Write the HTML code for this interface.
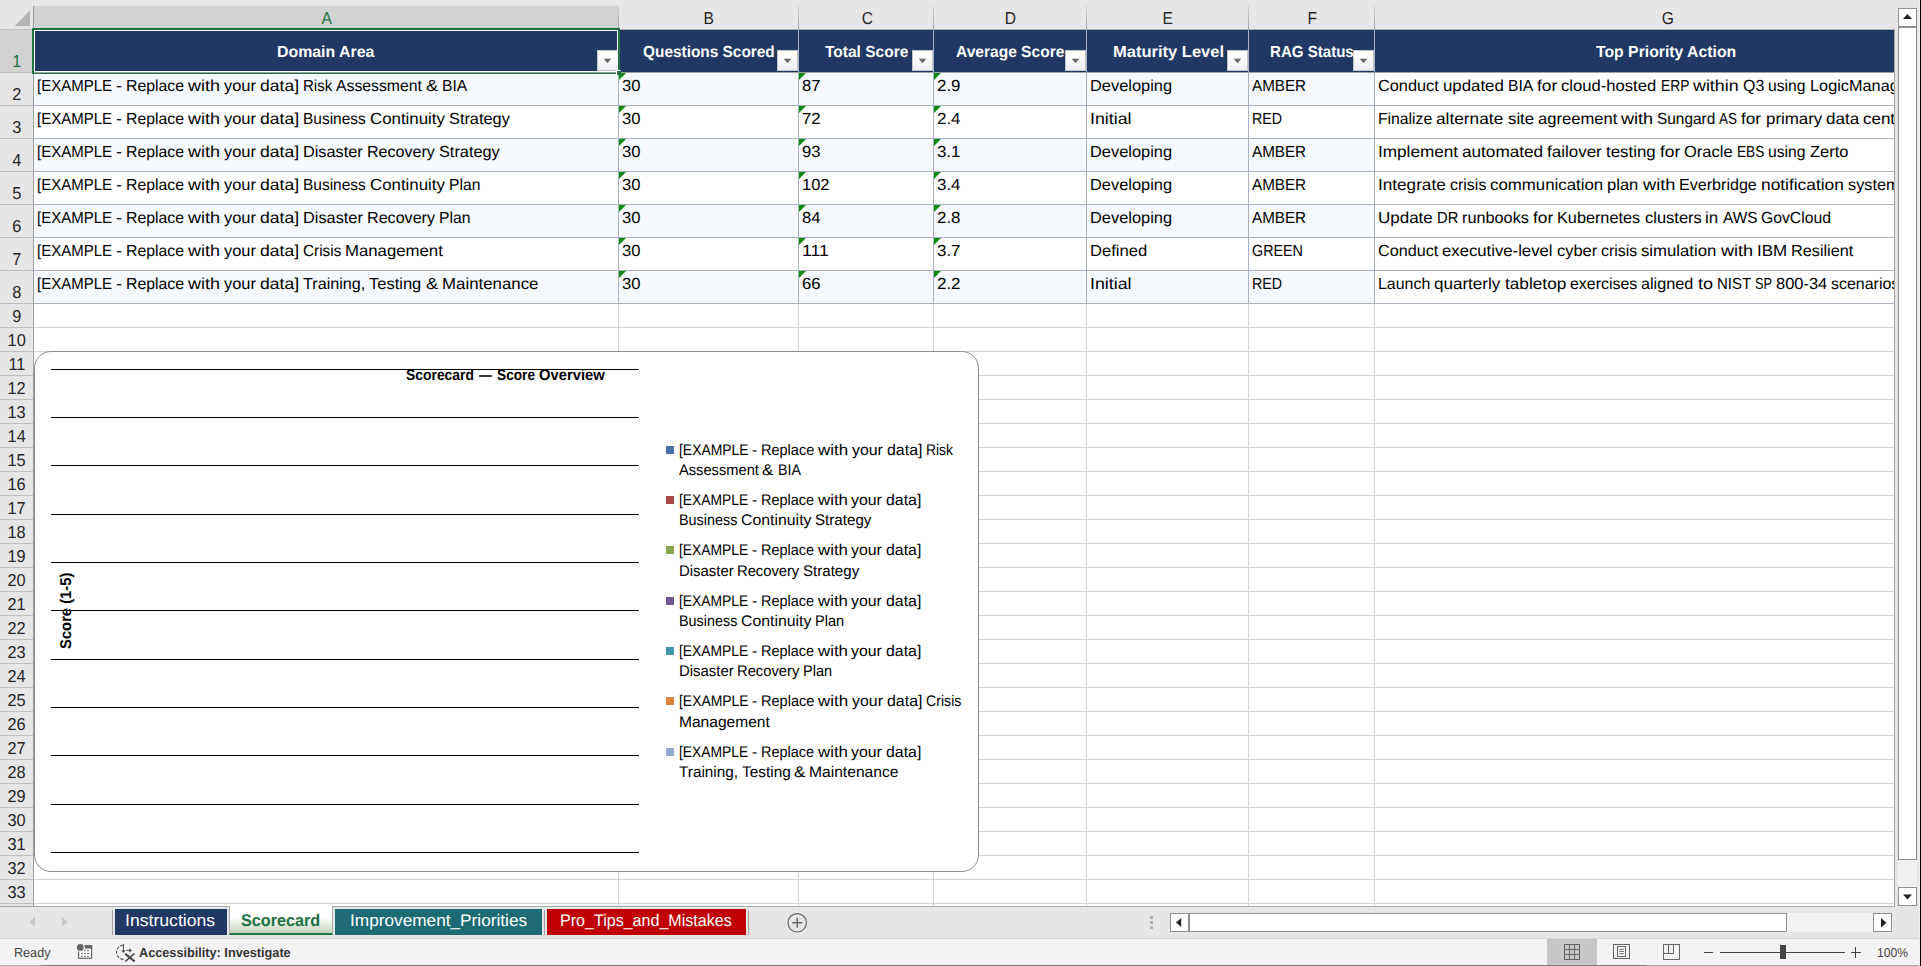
<!DOCTYPE html>
<html lang="en"><head><meta charset="utf-8"><title>Scorecard</title>
<style>
html,body{margin:0;padding:0}
body{width:1921px;height:966px;background:#e6e6e6;position:relative;overflow:hidden;font-family:'Liberation Sans',sans-serif}
body div,body svg,.t{position:absolute;display:block}
.g{left:0;top:0}
.t{white-space:pre;line-height:1;font-family:'Liberation Sans',sans-serif;text-rendering:geometricPrecision}
</style></head><body>
<div style="left:34px;top:30px;width:1860px;height:876px;background:#fff;"></div>
<div style="left:34px;top:303px;width:1860px;height:1px;background:#d4d4d4;"></div>
<div style="left:34px;top:327px;width:1860px;height:1px;background:#d4d4d4;"></div>
<div style="left:34px;top:351px;width:1860px;height:1px;background:#d4d4d4;"></div>
<div style="left:34px;top:375px;width:1860px;height:1px;background:#d4d4d4;"></div>
<div style="left:34px;top:399px;width:1860px;height:1px;background:#d4d4d4;"></div>
<div style="left:34px;top:423px;width:1860px;height:1px;background:#d4d4d4;"></div>
<div style="left:34px;top:447px;width:1860px;height:1px;background:#d4d4d4;"></div>
<div style="left:34px;top:471px;width:1860px;height:1px;background:#d4d4d4;"></div>
<div style="left:34px;top:495px;width:1860px;height:1px;background:#d4d4d4;"></div>
<div style="left:34px;top:519px;width:1860px;height:1px;background:#d4d4d4;"></div>
<div style="left:34px;top:543px;width:1860px;height:1px;background:#d4d4d4;"></div>
<div style="left:34px;top:567px;width:1860px;height:1px;background:#d4d4d4;"></div>
<div style="left:34px;top:591px;width:1860px;height:1px;background:#d4d4d4;"></div>
<div style="left:34px;top:615px;width:1860px;height:1px;background:#d4d4d4;"></div>
<div style="left:34px;top:639px;width:1860px;height:1px;background:#d4d4d4;"></div>
<div style="left:34px;top:663px;width:1860px;height:1px;background:#d4d4d4;"></div>
<div style="left:34px;top:687px;width:1860px;height:1px;background:#d4d4d4;"></div>
<div style="left:34px;top:711px;width:1860px;height:1px;background:#d4d4d4;"></div>
<div style="left:34px;top:735px;width:1860px;height:1px;background:#d4d4d4;"></div>
<div style="left:34px;top:759px;width:1860px;height:1px;background:#d4d4d4;"></div>
<div style="left:34px;top:783px;width:1860px;height:1px;background:#d4d4d4;"></div>
<div style="left:34px;top:807px;width:1860px;height:1px;background:#d4d4d4;"></div>
<div style="left:34px;top:831px;width:1860px;height:1px;background:#d4d4d4;"></div>
<div style="left:34px;top:855px;width:1860px;height:1px;background:#d4d4d4;"></div>
<div style="left:34px;top:879px;width:1860px;height:1px;background:#d4d4d4;"></div>
<div style="left:34px;top:903px;width:1860px;height:1px;background:#d4d4d4;"></div>
<div style="left:618px;top:303px;width:1px;height:603px;background:#d4d4d4;"></div>
<div style="left:798px;top:303px;width:1px;height:603px;background:#d4d4d4;"></div>
<div style="left:933px;top:303px;width:1px;height:603px;background:#d4d4d4;"></div>
<div style="left:1086px;top:303px;width:1px;height:603px;background:#d4d4d4;"></div>
<div style="left:1248px;top:303px;width:1px;height:603px;background:#d4d4d4;"></div>
<div style="left:1374px;top:303px;width:1px;height:603px;background:#d4d4d4;"></div>
<div style="left:34px;top:30px;width:1860px;height:42px;background:#1f3864;"></div>
<div style="left:34px;top:73px;width:1340px;height:32px;background:#f5f8fd;"></div>
<div style="left:34px;top:139px;width:1340px;height:32px;background:#f5f8fd;"></div>
<div style="left:34px;top:205px;width:1340px;height:32px;background:#f5f8fd;"></div>
<div style="left:34px;top:271px;width:1340px;height:32px;background:#f5f8fd;"></div>
<div style="left:34px;top:72px;width:1860px;height:1px;background:#a9b1c2;"></div>
<div style="left:34px;top:105px;width:1860px;height:1px;background:#a9b1c2;"></div>
<div style="left:34px;top:138px;width:1860px;height:1px;background:#a9b1c2;"></div>
<div style="left:34px;top:171px;width:1860px;height:1px;background:#a9b1c2;"></div>
<div style="left:34px;top:204px;width:1860px;height:1px;background:#a9b1c2;"></div>
<div style="left:34px;top:237px;width:1860px;height:1px;background:#a9b1c2;"></div>
<div style="left:34px;top:270px;width:1860px;height:1px;background:#a9b1c2;"></div>
<div style="left:34px;top:303px;width:1860px;height:1px;background:#a9b1c2;"></div>
<div style="left:618px;top:30px;width:1px;height:273px;background:#a9b1c2;"></div>
<div style="left:798px;top:30px;width:1px;height:273px;background:#a9b1c2;"></div>
<div style="left:933px;top:30px;width:1px;height:273px;background:#a9b1c2;"></div>
<div style="left:1086px;top:30px;width:1px;height:273px;background:#a9b1c2;"></div>
<div style="left:1248px;top:30px;width:1px;height:273px;background:#a9b1c2;"></div>
<div style="left:1374px;top:30px;width:1px;height:273px;background:#a9b1c2;"></div>
<span class="t" style="left:276.71px;top:45px;font-size:16.0px;font-weight:700;color:#fff;transform:scaleX(0.9919);transform-origin:left top">Domain Area</span>
<span class="t" style="left:642.82px;top:45px;font-size:16.0px;font-weight:700;color:#fff;transform:scaleX(0.9623);transform-origin:left top">Questions Scored</span>
<span class="t" style="left:824.60px;top:45px;font-size:16.0px;font-weight:700;color:#fff;transform:scaleX(0.9702);transform-origin:left top">Total Score</span>
<span class="t" style="left:956.06px;top:45px;font-size:16.0px;font-weight:700;color:#fff;transform:scaleX(0.9718);transform-origin:left top">Average Score</span>
<span class="t" style="left:1112.57px;top:45px;font-size:16.0px;font-weight:700;color:#fff;transform:scaleX(1.0318);transform-origin:left top">Maturity Level</span>
<span class="t" style="left:1269.56px;top:45px;font-size:16.0px;font-weight:700;color:#fff;transform:scaleX(0.9421);transform-origin:left top">RAG Status</span>
<span class="t" style="left:1596.30px;top:45px;font-size:16.0px;font-weight:700;color:#fff;transform:scaleX(0.9856);transform-origin:left top">Top Priority Action</span>
<div style="left:597px;top:50px;width:21px;height:21px;background:linear-gradient(#fff 20%,#eceef3);border:1px solid #c4c4c4;box-sizing:border-box"></div>
<svg style="left:602px;top:57px" width="11" height="8"><polygon points="1.8,1.8 9.2,1.8 5.5,6.2" fill="#666"/></svg>
<div style="left:777px;top:50px;width:21px;height:21px;background:linear-gradient(#fff 20%,#eceef3);border:1px solid #c4c4c4;box-sizing:border-box"></div>
<svg style="left:782px;top:57px" width="11" height="8"><polygon points="1.8,1.8 9.2,1.8 5.5,6.2" fill="#666"/></svg>
<div style="left:912px;top:50px;width:21px;height:21px;background:linear-gradient(#fff 20%,#eceef3);border:1px solid #c4c4c4;box-sizing:border-box"></div>
<svg style="left:917px;top:57px" width="11" height="8"><polygon points="1.8,1.8 9.2,1.8 5.5,6.2" fill="#666"/></svg>
<div style="left:1065px;top:50px;width:21px;height:21px;background:linear-gradient(#fff 20%,#eceef3);border:1px solid #c4c4c4;box-sizing:border-box"></div>
<svg style="left:1070px;top:57px" width="11" height="8"><polygon points="1.8,1.8 9.2,1.8 5.5,6.2" fill="#666"/></svg>
<div style="left:1227px;top:50px;width:21px;height:21px;background:linear-gradient(#fff 20%,#eceef3);border:1px solid #c4c4c4;box-sizing:border-box"></div>
<svg style="left:1232px;top:57px" width="11" height="8"><polygon points="1.8,1.8 9.2,1.8 5.5,6.2" fill="#666"/></svg>
<div style="left:1353px;top:50px;width:21px;height:21px;background:linear-gradient(#fff 20%,#eceef3);border:1px solid #c4c4c4;box-sizing:border-box"></div>
<svg style="left:1358px;top:57px" width="11" height="8"><polygon points="1.8,1.8 9.2,1.8 5.5,6.2" fill="#666"/></svg>
<div class="g"><span class="t" style="left:37.00px;top:79px;font-size:16.0px;transform:scaleX(0.9371);transform-origin:left top">[EXAMPLE</span> <span class="t" style="left:116.00px;top:79px;font-size:16.0px;transform:scaleX(1.1261);transform-origin:left top">-</span> <span class="t" style="left:126.00px;top:79px;font-size:16.0px;transform:scaleX(0.9880);transform-origin:left top">Replace</span> <span class="t" style="left:188.00px;top:79px;font-size:16.0px;transform:scaleX(1.1247);transform-origin:left top">with</span> <span class="t" style="left:224.00px;top:79px;font-size:16.0px;transform:scaleX(1.0281);transform-origin:left top">your</span> <span class="t" style="left:260.00px;top:79px;font-size:16.0px;transform:scaleX(1.0959);transform-origin:left top">data]</span> <span class="t" style="left:303.00px;top:79px;font-size:16.0px;transform:scaleX(0.9408);transform-origin:left top">Risk</span> <span class="t" style="left:336.30px;top:79px;font-size:16.0px;transform:scaleX(0.9844);transform-origin:left top">Assessment</span> <span class="t" style="left:426.12px;top:79px;font-size:16.0px;transform:scaleX(1.1348);transform-origin:left top">&amp;</span> <span class="t" style="left:442.27px;top:79px;font-size:16.0px;transform:scaleX(0.9783);transform-origin:left top">BIA</span></div>
<div class="g"><span class="t" style="left:622.00px;top:79px;font-size:16.0px;transform:scaleX(1.0395);transform-origin:left top">30</span></div>
<div class="g"><span class="t" style="left:802.00px;top:79px;font-size:16.0px;transform:scaleX(1.0395);transform-origin:left top">87</span></div>
<div class="g"><span class="t" style="left:937.00px;top:79px;font-size:16.0px;transform:scaleX(1.0566);transform-origin:left top">2.9</span></div>
<div class="g"><span class="t" style="left:1090.00px;top:79px;font-size:16.0px;transform:scaleX(1.0255);transform-origin:left top">Developing</span></div>
<div class="g"><span class="t" style="left:1252.00px;top:79px;font-size:16.0px;transform:scaleX(0.9508);transform-origin:left top">AMBER</span></div>
<div class="g"><span class="t" style="left:1378.00px;top:79px;font-size:16.0px;transform:scaleX(1.0198);transform-origin:left top">Conduct</span> <span class="t" style="left:1442.83px;top:79px;font-size:16.0px;transform:scaleX(1.0508);transform-origin:left top">updated</span> <span class="t" style="left:1507.65px;top:79px;font-size:16.0px;transform:scaleX(0.9819);transform-origin:left top">BIA</span> <span class="t" style="left:1537.03px;top:79px;font-size:16.0px;transform:scaleX(1.0849);transform-origin:left top">for</span> <span class="t" style="left:1561.33px;top:79px;font-size:16.0px;transform:scaleX(1.0392);transform-origin:left top">cloud-hosted</span> <span class="t" style="left:1660.60px;top:79px;font-size:16.0px;transform:scaleX(0.8621);transform-origin:left top">ERP</span> <span class="t" style="left:1693.01px;top:79px;font-size:16.0px;transform:scaleX(1.1143);transform-origin:left top">within</span> <span class="t" style="left:1742.64px;top:79px;font-size:16.0px;transform:scaleX(0.9966);transform-origin:left top">Q3</span> <span class="t" style="left:1767.97px;top:79px;font-size:16.0px;transform:scaleX(0.9798);transform-origin:left top">using</span> <span class="t" style="left:1809.50px;top:79px;font-size:16.0px;transform:scaleX(1.0189);transform-origin:left top">LogicManager</span></div>
<svg style="left:619px;top:73px" width="8" height="8"><polygon points="0,0 7,0 0,7" fill="#0f8a10"/></svg>
<svg style="left:799px;top:73px" width="8" height="8"><polygon points="0,0 7,0 0,7" fill="#0f8a10"/></svg>
<svg style="left:934px;top:73px" width="8" height="8"><polygon points="0,0 7,0 0,7" fill="#0f8a10"/></svg>
<div class="g"><span class="t" style="left:37.00px;top:112px;font-size:16.0px;transform:scaleX(0.9371);transform-origin:left top">[EXAMPLE</span> <span class="t" style="left:116.00px;top:112px;font-size:16.0px;transform:scaleX(1.1261);transform-origin:left top">-</span> <span class="t" style="left:126.00px;top:112px;font-size:16.0px;transform:scaleX(0.9880);transform-origin:left top">Replace</span> <span class="t" style="left:188.00px;top:112px;font-size:16.0px;transform:scaleX(1.1247);transform-origin:left top">with</span> <span class="t" style="left:224.00px;top:112px;font-size:16.0px;transform:scaleX(1.0281);transform-origin:left top">your</span> <span class="t" style="left:260.00px;top:112px;font-size:16.0px;transform:scaleX(1.0959);transform-origin:left top">data]</span> <span class="t" style="left:303.00px;top:112px;font-size:16.0px;transform:scaleX(0.9676);transform-origin:left top">Business</span> <span class="t" style="left:369.87px;top:112px;font-size:16.0px;transform:scaleX(1.0538);transform-origin:left top">Continuity</span> <span class="t" style="left:448.91px;top:112px;font-size:16.0px;transform:scaleX(1.0203);transform-origin:left top">Strategy</span></div>
<div class="g"><span class="t" style="left:622.00px;top:112px;font-size:16.0px;transform:scaleX(1.0395);transform-origin:left top">30</span></div>
<div class="g"><span class="t" style="left:802.00px;top:112px;font-size:16.0px;transform:scaleX(1.0395);transform-origin:left top">72</span></div>
<div class="g"><span class="t" style="left:937.00px;top:112px;font-size:16.0px;transform:scaleX(1.0566);transform-origin:left top">2.4</span></div>
<div class="g"><span class="t" style="left:1090.00px;top:112px;font-size:16.0px;transform:scaleX(1.1111);transform-origin:left top">Initial</span></div>
<div class="g"><span class="t" style="left:1252.00px;top:112px;font-size:16.0px;transform:scaleX(0.8881);transform-origin:left top">RED</span></div>
<div class="g"><span class="t" style="left:1378.00px;top:112px;font-size:16.0px;transform:scaleX(0.9833);transform-origin:left top">Finalize</span> <span class="t" style="left:1436.23px;top:112px;font-size:16.0px;transform:scaleX(1.0802);transform-origin:left top">alternate</span> <span class="t" style="left:1507.50px;top:112px;font-size:16.0px;transform:scaleX(1.0483);transform-origin:left top">site</span> <span class="t" style="left:1537.62px;top:112px;font-size:16.0px;transform:scaleX(1.0368);transform-origin:left top">agreement</span> <span class="t" style="left:1620.94px;top:112px;font-size:16.0px;transform:scaleX(1.1290);transform-origin:left top">with</span> <span class="t" style="left:1657.08px;top:112px;font-size:16.0px;transform:scaleX(0.9625);transform-origin:left top">Sungard</span> <span class="t" style="left:1719.33px;top:112px;font-size:16.0px;transform:scaleX(0.8466);transform-origin:left top">AS</span> <span class="t" style="left:1741.41px;top:112px;font-size:16.0px;transform:scaleX(1.0753);transform-origin:left top">for</span> <span class="t" style="left:1765.51px;top:112px;font-size:16.0px;transform:scaleX(1.0540);transform-origin:left top">primary</span> <span class="t" style="left:1825.74px;top:112px;font-size:16.0px;transform:scaleX(1.0638);transform-origin:left top">data</span> <span class="t" style="left:1862.88px;top:112px;font-size:16.0px;transform:scaleX(1.0610);transform-origin:left top">center</span></div>
<svg style="left:619px;top:106px" width="8" height="8"><polygon points="0,0 7,0 0,7" fill="#0f8a10"/></svg>
<svg style="left:799px;top:106px" width="8" height="8"><polygon points="0,0 7,0 0,7" fill="#0f8a10"/></svg>
<svg style="left:934px;top:106px" width="8" height="8"><polygon points="0,0 7,0 0,7" fill="#0f8a10"/></svg>
<div class="g"><span class="t" style="left:37.00px;top:145px;font-size:16.0px;transform:scaleX(0.9371);transform-origin:left top">[EXAMPLE</span> <span class="t" style="left:116.00px;top:145px;font-size:16.0px;transform:scaleX(1.1261);transform-origin:left top">-</span> <span class="t" style="left:126.00px;top:145px;font-size:16.0px;transform:scaleX(0.9880);transform-origin:left top">Replace</span> <span class="t" style="left:188.00px;top:145px;font-size:16.0px;transform:scaleX(1.1247);transform-origin:left top">with</span> <span class="t" style="left:224.00px;top:145px;font-size:16.0px;transform:scaleX(1.0281);transform-origin:left top">your</span> <span class="t" style="left:260.00px;top:145px;font-size:16.0px;transform:scaleX(1.0959);transform-origin:left top">data]</span> <span class="t" style="left:303.00px;top:145px;font-size:16.0px;transform:scaleX(1.0174);transform-origin:left top">Disaster</span> <span class="t" style="left:366.75px;top:145px;font-size:16.0px;transform:scaleX(1.0032);transform-origin:left top">Recovery</span> <span class="t" style="left:438.59px;top:145px;font-size:16.0px;transform:scaleX(1.0189);transform-origin:left top">Strategy</span></div>
<div class="g"><span class="t" style="left:622.00px;top:145px;font-size:16.0px;transform:scaleX(1.0395);transform-origin:left top">30</span></div>
<div class="g"><span class="t" style="left:802.00px;top:145px;font-size:16.0px;transform:scaleX(1.0395);transform-origin:left top">93</span></div>
<div class="g"><span class="t" style="left:937.00px;top:145px;font-size:16.0px;transform:scaleX(1.0566);transform-origin:left top">3.1</span></div>
<div class="g"><span class="t" style="left:1090.00px;top:145px;font-size:16.0px;transform:scaleX(1.0255);transform-origin:left top">Developing</span></div>
<div class="g"><span class="t" style="left:1252.00px;top:145px;font-size:16.0px;transform:scaleX(0.9508);transform-origin:left top">AMBER</span></div>
<div class="g"><span class="t" style="left:1378.00px;top:145px;font-size:16.0px;transform:scaleX(1.0720);transform-origin:left top">Implement</span> <span class="t" style="left:1462.13px;top:145px;font-size:16.0px;transform:scaleX(1.0724);transform-origin:left top">automated</span> <span class="t" style="left:1547.27px;top:145px;font-size:16.0px;transform:scaleX(1.0612);transform-origin:left top">failover</span> <span class="t" style="left:1606.05px;top:145px;font-size:16.0px;transform:scaleX(1.0536);transform-origin:left top">testing</span> <span class="t" style="left:1659.77px;top:145px;font-size:16.0px;transform:scaleX(1.0857);transform-origin:left top">for</span> <span class="t" style="left:1684.10px;top:145px;font-size:16.0px;transform:scaleX(1.0324);transform-origin:left top">Oracle</span> <span class="t" style="left:1736.81px;top:145px;font-size:16.0px;transform:scaleX(0.8548);transform-origin:left top">EBS</span> <span class="t" style="left:1768.23px;top:145px;font-size:16.0px;transform:scaleX(0.9805);transform-origin:left top">using</span> <span class="t" style="left:1809.78px;top:145px;font-size:16.0px;transform:scaleX(1.0314);transform-origin:left top">Zerto</span></div>
<svg style="left:619px;top:139px" width="8" height="8"><polygon points="0,0 7,0 0,7" fill="#0f8a10"/></svg>
<svg style="left:799px;top:139px" width="8" height="8"><polygon points="0,0 7,0 0,7" fill="#0f8a10"/></svg>
<svg style="left:934px;top:139px" width="8" height="8"><polygon points="0,0 7,0 0,7" fill="#0f8a10"/></svg>
<div class="g"><span class="t" style="left:37.00px;top:178px;font-size:16.0px;transform:scaleX(0.9371);transform-origin:left top">[EXAMPLE</span> <span class="t" style="left:116.00px;top:178px;font-size:16.0px;transform:scaleX(1.1261);transform-origin:left top">-</span> <span class="t" style="left:126.00px;top:178px;font-size:16.0px;transform:scaleX(0.9880);transform-origin:left top">Replace</span> <span class="t" style="left:188.00px;top:178px;font-size:16.0px;transform:scaleX(1.1247);transform-origin:left top">with</span> <span class="t" style="left:224.00px;top:178px;font-size:16.0px;transform:scaleX(1.0281);transform-origin:left top">your</span> <span class="t" style="left:260.00px;top:178px;font-size:16.0px;transform:scaleX(1.0959);transform-origin:left top">data]</span> <span class="t" style="left:303.00px;top:178px;font-size:16.0px;transform:scaleX(0.9665);transform-origin:left top">Business</span> <span class="t" style="left:369.79px;top:178px;font-size:16.0px;transform:scaleX(1.0526);transform-origin:left top">Continuity</span> <span class="t" style="left:448.73px;top:178px;font-size:16.0px;transform:scaleX(0.9797);transform-origin:left top">Plan</span></div>
<div class="g"><span class="t" style="left:622.00px;top:178px;font-size:16.0px;transform:scaleX(1.0395);transform-origin:left top">30</span></div>
<div class="g"><span class="t" style="left:802.00px;top:178px;font-size:16.0px;transform:scaleX(1.0301);transform-origin:left top">102</span></div>
<div class="g"><span class="t" style="left:937.00px;top:178px;font-size:16.0px;transform:scaleX(1.0566);transform-origin:left top">3.4</span></div>
<div class="g"><span class="t" style="left:1090.00px;top:178px;font-size:16.0px;transform:scaleX(1.0255);transform-origin:left top">Developing</span></div>
<div class="g"><span class="t" style="left:1252.00px;top:178px;font-size:16.0px;transform:scaleX(0.9508);transform-origin:left top">AMBER</span></div>
<div class="g"><span class="t" style="left:1378.00px;top:178px;font-size:16.0px;transform:scaleX(1.0720);transform-origin:left top">Integrate</span> <span class="t" style="left:1449.75px;top:178px;font-size:16.0px;transform:scaleX(0.9984);transform-origin:left top">crisis</span> <span class="t" style="left:1490.17px;top:178px;font-size:16.0px;transform:scaleX(1.0518);transform-origin:left top">communication</span> <span class="t" style="left:1607.38px;top:178px;font-size:16.0px;transform:scaleX(1.0356);transform-origin:left top">plan</span> <span class="t" style="left:1642.75px;top:178px;font-size:16.0px;transform:scaleX(1.1365);transform-origin:left top">with</span> <span class="t" style="left:1679.13px;top:178px;font-size:16.0px;transform:scaleX(1.0056);transform-origin:left top">Everbridge</span> <span class="t" style="left:1760.98px;top:178px;font-size:16.0px;transform:scaleX(1.0833);transform-origin:left top">notification</span> <span class="t" style="left:1847.88px;top:178px;font-size:16.0px;transform:scaleX(1.0170);transform-origin:left top">system</span></div>
<svg style="left:619px;top:172px" width="8" height="8"><polygon points="0,0 7,0 0,7" fill="#0f8a10"/></svg>
<svg style="left:799px;top:172px" width="8" height="8"><polygon points="0,0 7,0 0,7" fill="#0f8a10"/></svg>
<svg style="left:934px;top:172px" width="8" height="8"><polygon points="0,0 7,0 0,7" fill="#0f8a10"/></svg>
<div class="g"><span class="t" style="left:37.00px;top:211px;font-size:16.0px;transform:scaleX(0.9371);transform-origin:left top">[EXAMPLE</span> <span class="t" style="left:116.00px;top:211px;font-size:16.0px;transform:scaleX(1.1261);transform-origin:left top">-</span> <span class="t" style="left:126.00px;top:211px;font-size:16.0px;transform:scaleX(0.9880);transform-origin:left top">Replace</span> <span class="t" style="left:188.00px;top:211px;font-size:16.0px;transform:scaleX(1.1247);transform-origin:left top">with</span> <span class="t" style="left:224.00px;top:211px;font-size:16.0px;transform:scaleX(1.0281);transform-origin:left top">your</span> <span class="t" style="left:260.00px;top:211px;font-size:16.0px;transform:scaleX(1.0959);transform-origin:left top">data]</span> <span class="t" style="left:303.00px;top:211px;font-size:16.0px;transform:scaleX(1.0207);transform-origin:left top">Disaster</span> <span class="t" style="left:366.95px;top:211px;font-size:16.0px;transform:scaleX(1.0065);transform-origin:left top">Recovery</span> <span class="t" style="left:439.03px;top:211px;font-size:16.0px;transform:scaleX(0.9827);transform-origin:left top">Plan</span></div>
<div class="g"><span class="t" style="left:622.00px;top:211px;font-size:16.0px;transform:scaleX(1.0395);transform-origin:left top">30</span></div>
<div class="g"><span class="t" style="left:802.00px;top:211px;font-size:16.0px;transform:scaleX(1.0395);transform-origin:left top">84</span></div>
<div class="g"><span class="t" style="left:937.00px;top:211px;font-size:16.0px;transform:scaleX(1.0566);transform-origin:left top">2.8</span></div>
<div class="g"><span class="t" style="left:1090.00px;top:211px;font-size:16.0px;transform:scaleX(1.0255);transform-origin:left top">Developing</span></div>
<div class="g"><span class="t" style="left:1252.00px;top:211px;font-size:16.0px;transform:scaleX(0.9508);transform-origin:left top">AMBER</span></div>
<div class="g"><span class="t" style="left:1378.00px;top:211px;font-size:16.0px;transform:scaleX(1.0612);transform-origin:left top">Update</span> <span class="t" style="left:1436.80px;top:211px;font-size:16.0px;transform:scaleX(0.9213);transform-origin:left top">DR</span> <span class="t" style="left:1462.15px;top:211px;font-size:16.0px;transform:scaleX(1.0166);transform-origin:left top">runbooks</span> <span class="t" style="left:1533.12px;top:211px;font-size:16.0px;transform:scaleX(1.0860);transform-origin:left top">for</span> <span class="t" style="left:1557.46px;top:211px;font-size:16.0px;transform:scaleX(1.0159);transform-origin:left top">Kubernetes</span> <span class="t" style="left:1644.65px;top:211px;font-size:16.0px;transform:scaleX(1.0300);transform-origin:left top">clusters</span> <span class="t" style="left:1705.48px;top:211px;font-size:16.0px;transform:scaleX(1.0584);transform-origin:left top">in</span> <span class="t" style="left:1722.72px;top:211px;font-size:16.0px;transform:scaleX(0.9615);transform-origin:left top">AWS</span> <span class="t" style="left:1761.24px;top:211px;font-size:16.0px;transform:scaleX(0.9833);transform-origin:left top">GovCloud</span></div>
<svg style="left:619px;top:205px" width="8" height="8"><polygon points="0,0 7,0 0,7" fill="#0f8a10"/></svg>
<svg style="left:799px;top:205px" width="8" height="8"><polygon points="0,0 7,0 0,7" fill="#0f8a10"/></svg>
<svg style="left:934px;top:205px" width="8" height="8"><polygon points="0,0 7,0 0,7" fill="#0f8a10"/></svg>
<div class="g"><span class="t" style="left:37.00px;top:244px;font-size:16.0px;transform:scaleX(0.9371);transform-origin:left top">[EXAMPLE</span> <span class="t" style="left:116.00px;top:244px;font-size:16.0px;transform:scaleX(1.1261);transform-origin:left top">-</span> <span class="t" style="left:126.00px;top:244px;font-size:16.0px;transform:scaleX(0.9880);transform-origin:left top">Replace</span> <span class="t" style="left:188.00px;top:244px;font-size:16.0px;transform:scaleX(1.1247);transform-origin:left top">with</span> <span class="t" style="left:224.00px;top:244px;font-size:16.0px;transform:scaleX(1.0281);transform-origin:left top">your</span> <span class="t" style="left:260.00px;top:244px;font-size:16.0px;transform:scaleX(1.0959);transform-origin:left top">data]</span> <span class="t" style="left:303.00px;top:244px;font-size:16.0px;transform:scaleX(0.9584);transform-origin:left top">Crisis</span> <span class="t" style="left:345.36px;top:244px;font-size:16.0px;transform:scaleX(1.0476);transform-origin:left top">Management</span></div>
<div class="g"><span class="t" style="left:622.00px;top:244px;font-size:16.0px;transform:scaleX(1.0395);transform-origin:left top">30</span></div>
<div class="g"><span class="t" style="left:802.00px;top:244px;font-size:16.0px;transform:scaleX(1.1102);transform-origin:left top">111</span></div>
<div class="g"><span class="t" style="left:937.00px;top:244px;font-size:16.0px;transform:scaleX(1.0566);transform-origin:left top">3.7</span></div>
<div class="g"><span class="t" style="left:1090.00px;top:244px;font-size:16.0px;transform:scaleX(1.0372);transform-origin:left top">Defined</span></div>
<div class="g"><span class="t" style="left:1252.00px;top:244px;font-size:16.0px;transform:scaleX(0.8946);transform-origin:left top">GREEN</span></div>
<div class="g"><span class="t" style="left:1378.00px;top:244px;font-size:16.0px;transform:scaleX(1.0115);transform-origin:left top">Conduct</span> <span class="t" style="left:1442.30px;top:244px;font-size:16.0px;transform:scaleX(1.0443);transform-origin:left top">executive-level</span> <span class="t" style="left:1556.83px;top:244px;font-size:16.0px;transform:scaleX(1.0271);transform-origin:left top">cyber</span> <span class="t" style="left:1601.03px;top:244px;font-size:16.0px;transform:scaleX(0.9926);transform-origin:left top">crisis</span> <span class="t" style="left:1641.22px;top:244px;font-size:16.0px;transform:scaleX(1.0461);transform-origin:left top">simulation</span> <span class="t" style="left:1720.59px;top:244px;font-size:16.0px;transform:scaleX(1.1299);transform-origin:left top">with</span> <span class="t" style="left:1756.75px;top:244px;font-size:16.0px;transform:scaleX(1.0596);transform-origin:left top">IBM</span> <span class="t" style="left:1790.91px;top:244px;font-size:16.0px;transform:scaleX(1.0151);transform-origin:left top">Resilient</span></div>
<svg style="left:619px;top:238px" width="8" height="8"><polygon points="0,0 7,0 0,7" fill="#0f8a10"/></svg>
<svg style="left:799px;top:238px" width="8" height="8"><polygon points="0,0 7,0 0,7" fill="#0f8a10"/></svg>
<svg style="left:934px;top:238px" width="8" height="8"><polygon points="0,0 7,0 0,7" fill="#0f8a10"/></svg>
<div class="g"><span class="t" style="left:37.00px;top:277px;font-size:16.0px;transform:scaleX(0.9371);transform-origin:left top">[EXAMPLE</span> <span class="t" style="left:116.00px;top:277px;font-size:16.0px;transform:scaleX(1.1261);transform-origin:left top">-</span> <span class="t" style="left:126.00px;top:277px;font-size:16.0px;transform:scaleX(0.9880);transform-origin:left top">Replace</span> <span class="t" style="left:188.00px;top:277px;font-size:16.0px;transform:scaleX(1.1247);transform-origin:left top">with</span> <span class="t" style="left:224.00px;top:277px;font-size:16.0px;transform:scaleX(1.0281);transform-origin:left top">your</span> <span class="t" style="left:260.00px;top:277px;font-size:16.0px;transform:scaleX(1.0959);transform-origin:left top">data]</span> <span class="t" style="left:303.00px;top:277px;font-size:16.0px;transform:scaleX(1.0107);transform-origin:left top">Training,</span> <span class="t" style="left:369.34px;top:277px;font-size:16.0px;transform:scaleX(1.0310);transform-origin:left top">Testing</span> <span class="t" style="left:425.63px;top:277px;font-size:16.0px;transform:scaleX(1.1302);transform-origin:left top">&amp;</span> <span class="t" style="left:441.71px;top:277px;font-size:16.0px;transform:scaleX(1.0532);transform-origin:left top">Maintenance</span></div>
<div class="g"><span class="t" style="left:622.00px;top:277px;font-size:16.0px;transform:scaleX(1.0395);transform-origin:left top">30</span></div>
<div class="g"><span class="t" style="left:802.00px;top:277px;font-size:16.0px;transform:scaleX(1.0395);transform-origin:left top">66</span></div>
<div class="g"><span class="t" style="left:937.00px;top:277px;font-size:16.0px;transform:scaleX(1.0566);transform-origin:left top">2.2</span></div>
<div class="g"><span class="t" style="left:1090.00px;top:277px;font-size:16.0px;transform:scaleX(1.1111);transform-origin:left top">Initial</span></div>
<div class="g"><span class="t" style="left:1252.00px;top:277px;font-size:16.0px;transform:scaleX(0.8881);transform-origin:left top">RED</span></div>
<div class="g"><span class="t" style="left:1378.00px;top:277px;font-size:16.0px;transform:scaleX(0.9955);transform-origin:left top">Launch</span> <span class="t" style="left:1434.27px;top:277px;font-size:16.0px;transform:scaleX(1.0654);transform-origin:left top">quarterly</span> <span class="t" style="left:1504.62px;top:277px;font-size:16.0px;transform:scaleX(1.0766);transform-origin:left top">tabletop</span> <span class="t" style="left:1569.94px;top:277px;font-size:16.0px;transform:scaleX(0.9963);transform-origin:left top">exercises</span> <span class="t" style="left:1641.28px;top:277px;font-size:16.0px;transform:scaleX(1.0127);transform-origin:left top">aligned</span> <span class="t" style="left:1697.56px;top:277px;font-size:16.0px;transform:scaleX(1.1296);transform-origin:left top">to</span> <span class="t" style="left:1716.65px;top:277px;font-size:16.0px;transform:scaleX(0.9375);transform-origin:left top">NIST</span> <span class="t" style="left:1754.84px;top:277px;font-size:16.0px;transform:scaleX(0.8004);transform-origin:left top">SP</span> <span class="t" style="left:1775.94px;top:277px;font-size:16.0px;transform:scaleX(1.0287);transform-origin:left top">800-34</span> <span class="t" style="left:1831.21px;top:277px;font-size:16.0px;transform:scaleX(0.9979);transform-origin:left top">scenarios</span></div>
<svg style="left:619px;top:271px" width="8" height="8"><polygon points="0,0 7,0 0,7" fill="#0f8a10"/></svg>
<svg style="left:799px;top:271px" width="8" height="8"><polygon points="0,0 7,0 0,7" fill="#0f8a10"/></svg>
<svg style="left:934px;top:271px" width="8" height="8"><polygon points="0,0 7,0 0,7" fill="#0f8a10"/></svg>
<div style="left:1895px;top:0px;width:26px;height:938px;background:#e6e6e6;"></div>
<div style="left:1894px;top:29px;width:1px;height:877px;background:#a6a6a6;"></div>
<div style="left:1898px;top:27px;width:19px;height:860px;background:#f0f0f0;"></div>
<div style="left:1898px;top:8px;width:19px;height:19px;background:#fff;border:1px solid #8f8f8f;box-sizing:border-box"></div>
<svg style="left:1902px;top:13px" width="12" height="8"><polygon points="1,6 10,6 5.5,1" fill="#222"/></svg>
<div style="left:1898px;top:27px;width:19px;height:833px;background:#fff;border:1px solid #8f8f8f;box-sizing:border-box"></div>
<div style="left:1898px;top:887px;width:19px;height:19px;background:#fff;border:1px solid #8f8f8f;box-sizing:border-box"></div>
<svg style="left:1902px;top:893px" width="12" height="8"><polygon points="1,1.5 10,1.5 5.5,6.5" fill="#222"/></svg>
<div style="left:34px;top:6px;width:584px;height:23px;background:#d2d2d2;"></div>
<div style="left:619px;top:28px;width:1275px;height:1px;background:#efefef;"></div>
<div style="left:618px;top:6px;width:1px;height:23px;background:linear-gradient(#d4d4d4,#9c9c9c);"></div>
<div style="left:798px;top:6px;width:1px;height:23px;background:linear-gradient(#d4d4d4,#9c9c9c);"></div>
<div style="left:933px;top:6px;width:1px;height:23px;background:linear-gradient(#d4d4d4,#9c9c9c);"></div>
<div style="left:1086px;top:6px;width:1px;height:23px;background:linear-gradient(#d4d4d4,#9c9c9c);"></div>
<div style="left:1248px;top:6px;width:1px;height:23px;background:linear-gradient(#d4d4d4,#9c9c9c);"></div>
<div style="left:1374px;top:6px;width:1px;height:23px;background:linear-gradient(#d4d4d4,#9c9c9c);"></div>
<div style="left:34px;top:29px;width:1861px;height:1px;background:#ababab;"></div>
<span class="t" style="left:321.19px;top:10px;font-size:17.3px;color:#217346;transform:scaleX(0.9000);transform-origin:5.81px top">A</span>
<span class="t" style="left:703.42px;top:10px;font-size:17.3px;color:#262626;transform:scaleX(0.9000);transform-origin:6.08px top">B</span>
<span class="t" style="left:860.65px;top:10px;font-size:17.3px;color:#262626;transform:scaleX(0.9000);transform-origin:6.35px top">C</span>
<span class="t" style="left:1004.38px;top:10px;font-size:17.3px;color:#262626;transform:scaleX(0.9000);transform-origin:6.62px top">D</span>
<span class="t" style="left:1162.42px;top:10px;font-size:17.3px;color:#262626;transform:scaleX(0.9000);transform-origin:6.08px top">E</span>
<span class="t" style="left:1306.82px;top:10px;font-size:17.3px;color:#262626;transform:scaleX(0.9000);transform-origin:5.68px top">F</span>
<span class="t" style="left:1661.31px;top:10px;font-size:17.3px;color:#262626;transform:scaleX(0.9000);transform-origin:6.49px top">G</span>
<svg style="left:12px;top:8px" width="20" height="20"><polygon points="18,2.5 18,18 2.5,18" fill="#b4b4b4"/></svg>
<div style="left:0px;top:30px;width:33px;height:876px;background:#e6e6e6;"></div>
<div style="left:0px;top:30px;width:33px;height:42px;background:#d2d2d2;"></div>
<div style="left:33px;top:6px;width:1px;height:900px;background:#9e9e9e;"></div>
<div style="left:0px;top:29px;width:33px;height:1px;background:#c0c0c0;"></div>
<div style="left:0px;top:72px;width:33px;height:1px;background:#bfbfbf;"></div>
<span class="t" style="left:12.00px;top:53px;font-size:17.3px;color:#217346;transform:scaleX(0.9450);transform-origin:5.00px top">1</span>
<div style="left:0px;top:105px;width:33px;height:1px;background:#bfbfbf;"></div>
<span class="t" style="left:12.13px;top:86px;font-size:17.3px;color:#262626;transform:scaleX(0.9450);transform-origin:4.87px top">2</span>
<div style="left:0px;top:138px;width:33px;height:1px;background:#bfbfbf;"></div>
<span class="t" style="left:12.27px;top:119px;font-size:17.3px;color:#262626;transform:scaleX(0.9450);transform-origin:4.73px top">3</span>
<div style="left:0px;top:171px;width:33px;height:1px;background:#bfbfbf;"></div>
<span class="t" style="left:12.27px;top:152px;font-size:17.3px;color:#262626;transform:scaleX(0.9450);transform-origin:4.73px top">4</span>
<div style="left:0px;top:204px;width:33px;height:1px;background:#bfbfbf;"></div>
<span class="t" style="left:12.27px;top:185px;font-size:17.3px;color:#262626;transform:scaleX(0.9450);transform-origin:4.73px top">5</span>
<div style="left:0px;top:237px;width:33px;height:1px;background:#bfbfbf;"></div>
<span class="t" style="left:12.13px;top:218px;font-size:17.3px;color:#262626;transform:scaleX(0.9450);transform-origin:4.87px top">6</span>
<div style="left:0px;top:270px;width:33px;height:1px;background:#bfbfbf;"></div>
<span class="t" style="left:12.13px;top:251px;font-size:17.3px;color:#262626;transform:scaleX(0.9450);transform-origin:4.87px top">7</span>
<div style="left:0px;top:303px;width:33px;height:1px;background:#bfbfbf;"></div>
<span class="t" style="left:12.27px;top:284px;font-size:17.3px;color:#262626;transform:scaleX(0.9450);transform-origin:4.73px top">8</span>
<div style="left:0px;top:327px;width:33px;height:1px;background:#bfbfbf;"></div>
<span class="t" style="left:12.13px;top:308px;font-size:17.3px;color:#262626;transform:scaleX(0.9450);transform-origin:4.87px top">9</span>
<div style="left:0px;top:351px;width:33px;height:1px;background:#bfbfbf;"></div>
<span class="t" style="left:7.05px;top:332px;font-size:17.3px;color:#262626;transform:scaleX(0.9450);transform-origin:9.95px top">10</span>
<div style="left:0px;top:375px;width:33px;height:1px;background:#bfbfbf;"></div>
<span class="t" style="left:7.83px;top:356px;font-size:17.3px;color:#262626;transform:scaleX(0.9450);transform-origin:9.17px top">11</span>
<div style="left:0px;top:399px;width:33px;height:1px;background:#bfbfbf;"></div>
<span class="t" style="left:7.19px;top:380px;font-size:17.3px;color:#262626;transform:scaleX(0.9450);transform-origin:9.81px top">12</span>
<div style="left:0px;top:423px;width:33px;height:1px;background:#bfbfbf;"></div>
<span class="t" style="left:7.19px;top:404px;font-size:17.3px;color:#262626;transform:scaleX(0.9450);transform-origin:9.81px top">13</span>
<div style="left:0px;top:447px;width:33px;height:1px;background:#bfbfbf;"></div>
<span class="t" style="left:7.05px;top:428px;font-size:17.3px;color:#262626;transform:scaleX(0.9450);transform-origin:9.95px top">14</span>
<div style="left:0px;top:471px;width:33px;height:1px;background:#bfbfbf;"></div>
<span class="t" style="left:7.19px;top:452px;font-size:17.3px;color:#262626;transform:scaleX(0.9450);transform-origin:9.81px top">15</span>
<div style="left:0px;top:495px;width:33px;height:1px;background:#bfbfbf;"></div>
<span class="t" style="left:7.19px;top:476px;font-size:17.3px;color:#262626;transform:scaleX(0.9450);transform-origin:9.81px top">16</span>
<div style="left:0px;top:519px;width:33px;height:1px;background:#bfbfbf;"></div>
<span class="t" style="left:7.19px;top:500px;font-size:17.3px;color:#262626;transform:scaleX(0.9450);transform-origin:9.81px top">17</span>
<div style="left:0px;top:543px;width:33px;height:1px;background:#bfbfbf;"></div>
<span class="t" style="left:7.19px;top:524px;font-size:17.3px;color:#262626;transform:scaleX(0.9450);transform-origin:9.81px top">18</span>
<div style="left:0px;top:567px;width:33px;height:1px;background:#bfbfbf;"></div>
<span class="t" style="left:7.19px;top:548px;font-size:17.3px;color:#262626;transform:scaleX(0.9450);transform-origin:9.81px top">19</span>
<div style="left:0px;top:591px;width:33px;height:1px;background:#bfbfbf;"></div>
<span class="t" style="left:7.19px;top:572px;font-size:17.3px;color:#262626;transform:scaleX(0.9450);transform-origin:9.81px top">20</span>
<div style="left:0px;top:615px;width:33px;height:1px;background:#bfbfbf;"></div>
<span class="t" style="left:7.32px;top:596px;font-size:17.3px;color:#262626;transform:scaleX(0.9450);transform-origin:9.68px top">21</span>
<div style="left:0px;top:639px;width:33px;height:1px;background:#bfbfbf;"></div>
<span class="t" style="left:7.32px;top:620px;font-size:17.3px;color:#262626;transform:scaleX(0.9450);transform-origin:9.68px top">22</span>
<div style="left:0px;top:663px;width:33px;height:1px;background:#bfbfbf;"></div>
<span class="t" style="left:7.32px;top:644px;font-size:17.3px;color:#262626;transform:scaleX(0.9450);transform-origin:9.68px top">23</span>
<div style="left:0px;top:687px;width:33px;height:1px;background:#bfbfbf;"></div>
<span class="t" style="left:7.19px;top:668px;font-size:17.3px;color:#262626;transform:scaleX(0.9450);transform-origin:9.81px top">24</span>
<div style="left:0px;top:711px;width:33px;height:1px;background:#bfbfbf;"></div>
<span class="t" style="left:7.32px;top:692px;font-size:17.3px;color:#262626;transform:scaleX(0.9450);transform-origin:9.68px top">25</span>
<div style="left:0px;top:735px;width:33px;height:1px;background:#bfbfbf;"></div>
<span class="t" style="left:7.32px;top:716px;font-size:17.3px;color:#262626;transform:scaleX(0.9450);transform-origin:9.68px top">26</span>
<div style="left:0px;top:759px;width:33px;height:1px;background:#bfbfbf;"></div>
<span class="t" style="left:7.32px;top:740px;font-size:17.3px;color:#262626;transform:scaleX(0.9450);transform-origin:9.68px top">27</span>
<div style="left:0px;top:783px;width:33px;height:1px;background:#bfbfbf;"></div>
<span class="t" style="left:7.32px;top:764px;font-size:17.3px;color:#262626;transform:scaleX(0.9450);transform-origin:9.68px top">28</span>
<div style="left:0px;top:807px;width:33px;height:1px;background:#bfbfbf;"></div>
<span class="t" style="left:7.32px;top:788px;font-size:17.3px;color:#262626;transform:scaleX(0.9450);transform-origin:9.68px top">29</span>
<div style="left:0px;top:831px;width:33px;height:1px;background:#bfbfbf;"></div>
<span class="t" style="left:7.32px;top:812px;font-size:17.3px;color:#262626;transform:scaleX(0.9450);transform-origin:9.68px top">30</span>
<div style="left:0px;top:855px;width:33px;height:1px;background:#bfbfbf;"></div>
<span class="t" style="left:7.46px;top:836px;font-size:17.3px;color:#262626;transform:scaleX(0.9450);transform-origin:9.54px top">31</span>
<div style="left:0px;top:879px;width:33px;height:1px;background:#bfbfbf;"></div>
<span class="t" style="left:7.46px;top:860px;font-size:17.3px;color:#262626;transform:scaleX(0.9450);transform-origin:9.54px top">32</span>
<div style="left:0px;top:903px;width:33px;height:1px;background:#bfbfbf;"></div>
<span class="t" style="left:7.46px;top:884px;font-size:17.3px;color:#262626;transform:scaleX(0.9450);transform-origin:9.54px top">33</span>
<div style="left:32px;top:28px;width:588px;height:46px;border:2px solid #217346;box-sizing:border-box"></div>
<div style="left:34px;top:30px;width:584px;height:42px;border:1px solid #fff;box-sizing:border-box"></div>
<div style="left:34px;top:72px;width:1860px;height:1px;background:#a0a0a0;"></div>
<div style="left:616px;top:70px;width:5px;height:5px;background:#fff;"></div>
<div style="left:617px;top:71px;width:4px;height:4px;background:#217346;"></div>
<div style="left:34px;top:351px;width:945px;height:521px;background:#fff;border:1px solid #8e8e8e;border-radius:17px;box-sizing:border-box"></div>
<div style="left:51px;top:369px;width:588px;height:1px;background:#000;"></div>
<div style="left:51px;top:417px;width:588px;height:1px;background:#000;"></div>
<div style="left:51px;top:465px;width:588px;height:1px;background:#000;"></div>
<div style="left:51px;top:514px;width:588px;height:1px;background:#000;"></div>
<div style="left:51px;top:562px;width:588px;height:1px;background:#000;"></div>
<div style="left:51px;top:610px;width:588px;height:1px;background:#000;"></div>
<div style="left:51px;top:659px;width:588px;height:1px;background:#000;"></div>
<div style="left:51px;top:707px;width:588px;height:1px;background:#000;"></div>
<div style="left:51px;top:755px;width:588px;height:1px;background:#000;"></div>
<div style="left:51px;top:804px;width:588px;height:1px;background:#000;"></div>
<div style="left:51px;top:852px;width:588px;height:1px;background:#000;"></div>
<div class="g"><span class="t" style="left:406.03px;top:368px;font-size:15.3px;font-weight:700;transform:scaleX(0.9080);transform-origin:left top">Scorecard</span> <span class="t" style="left:479.10px;top:368px;font-size:15.3px;font-weight:700;transform:scaleX(0.8431);transform-origin:left top">—</span> <span class="t" style="left:496.69px;top:368px;font-size:15.3px;font-weight:700;transform:scaleX(0.8949);transform-origin:left top">Score</span> <span class="t" style="left:538.94px;top:368px;font-size:15.3px;font-weight:700;transform:scaleX(0.9657);transform-origin:left top">Overview</span></div>
<div style="left:666px;top:446px;width:8px;height:8px;background:#4572a7;"></div>
<div class="g"><span class="t" style="left:678.80px;top:443px;font-size:15.4px;transform:scaleX(0.9033);transform-origin:left top">[EXAMPLE</span> <span class="t" style="left:752.15px;top:443px;font-size:15.4px;transform:scaleX(0.9954);transform-origin:left top">-</span> <span class="t" style="left:761.03px;top:443px;font-size:15.4px;transform:scaleX(0.9428);transform-origin:left top">Replace</span> <span class="t" style="left:818.07px;top:443px;font-size:15.4px;transform:scaleX(1.0988);transform-origin:left top">with</span> <span class="t" style="left:851.93px;top:443px;font-size:15.4px;transform:scaleX(1.0319);transform-origin:left top">your</span> <span class="t" style="left:886.61px;top:443px;font-size:15.4px;transform:scaleX(1.0345);transform-origin:left top">data]</span> <span class="t" style="left:925.82px;top:443px;font-size:15.4px;transform:scaleX(0.9011);transform-origin:left top">Risk</span> <span class="t" style="left:678.80px;top:463px;font-size:15.4px;transform:scaleX(0.9528);transform-origin:left top">Assessment</span> <span class="t" style="left:762.48px;top:463px;font-size:15.4px;transform:scaleX(1.1062);transform-origin:left top">&amp;</span> <span class="t" style="left:777.60px;top:463px;font-size:15.4px;transform:scaleX(0.9224);transform-origin:left top">BIA</span></div>
<div style="left:666px;top:496px;width:8px;height:8px;background:#aa4643;"></div>
<div class="g"><span class="t" style="left:678.80px;top:493px;font-size:15.4px;transform:scaleX(0.9001);transform-origin:left top">[EXAMPLE</span> <span class="t" style="left:751.89px;top:493px;font-size:15.4px;transform:scaleX(0.9920);transform-origin:left top">-</span> <span class="t" style="left:760.74px;top:493px;font-size:15.4px;transform:scaleX(0.9396);transform-origin:left top">Replace</span> <span class="t" style="left:817.58px;top:493px;font-size:15.4px;transform:scaleX(1.0950);transform-origin:left top">with</span> <span class="t" style="left:851.33px;top:493px;font-size:15.4px;transform:scaleX(1.0283);transform-origin:left top">your</span> <span class="t" style="left:885.89px;top:493px;font-size:15.4px;transform:scaleX(1.0309);transform-origin:left top">data]</span> <span class="t" style="left:678.80px;top:513px;font-size:15.4px;transform:scaleX(0.9347);transform-origin:left top">Business</span> <span class="t" style="left:740.98px;top:513px;font-size:15.4px;transform:scaleX(1.0294);transform-origin:left top">Continuity</span> <span class="t" style="left:815.25px;top:513px;font-size:15.4px;transform:scaleX(0.9842);transform-origin:left top">Strategy</span></div>
<div style="left:666px;top:546px;width:8px;height:8px;background:#89a54e;"></div>
<div class="g"><span class="t" style="left:678.80px;top:543px;font-size:15.4px;transform:scaleX(0.9001);transform-origin:left top">[EXAMPLE</span> <span class="t" style="left:751.89px;top:543px;font-size:15.4px;transform:scaleX(0.9920);transform-origin:left top">-</span> <span class="t" style="left:760.74px;top:543px;font-size:15.4px;transform:scaleX(0.9396);transform-origin:left top">Replace</span> <span class="t" style="left:817.58px;top:543px;font-size:15.4px;transform:scaleX(1.0950);transform-origin:left top">with</span> <span class="t" style="left:851.33px;top:543px;font-size:15.4px;transform:scaleX(1.0283);transform-origin:left top">your</span> <span class="t" style="left:885.89px;top:543px;font-size:15.4px;transform:scaleX(1.0309);transform-origin:left top">data]</span> <span class="t" style="left:678.80px;top:564px;font-size:15.4px;transform:scaleX(0.9685);transform-origin:left top">Disaster</span> <span class="t" style="left:737.26px;top:564px;font-size:15.4px;transform:scaleX(0.9572);transform-origin:left top">Recovery</span> <span class="t" style="left:803.29px;top:564px;font-size:15.4px;transform:scaleX(0.9802);transform-origin:left top">Strategy</span></div>
<div style="left:666px;top:597px;width:8px;height:8px;background:#71588f;"></div>
<div class="g"><span class="t" style="left:678.80px;top:594px;font-size:15.4px;transform:scaleX(0.9001);transform-origin:left top">[EXAMPLE</span> <span class="t" style="left:751.89px;top:594px;font-size:15.4px;transform:scaleX(0.9920);transform-origin:left top">-</span> <span class="t" style="left:760.74px;top:594px;font-size:15.4px;transform:scaleX(0.9396);transform-origin:left top">Replace</span> <span class="t" style="left:817.58px;top:594px;font-size:15.4px;transform:scaleX(1.0950);transform-origin:left top">with</span> <span class="t" style="left:851.33px;top:594px;font-size:15.4px;transform:scaleX(1.0283);transform-origin:left top">your</span> <span class="t" style="left:885.89px;top:594px;font-size:15.4px;transform:scaleX(1.0309);transform-origin:left top">data]</span> <span class="t" style="left:678.80px;top:614px;font-size:15.4px;transform:scaleX(0.9347);transform-origin:left top">Business</span> <span class="t" style="left:740.98px;top:614px;font-size:15.4px;transform:scaleX(1.0293);transform-origin:left top">Continuity</span> <span class="t" style="left:815.25px;top:614px;font-size:15.4px;transform:scaleX(0.9490);transform-origin:left top">Plan</span></div>
<div style="left:666px;top:647px;width:8px;height:8px;background:#4198af;"></div>
<div class="g"><span class="t" style="left:678.80px;top:644px;font-size:15.4px;transform:scaleX(0.9001);transform-origin:left top">[EXAMPLE</span> <span class="t" style="left:751.89px;top:644px;font-size:15.4px;transform:scaleX(0.9920);transform-origin:left top">-</span> <span class="t" style="left:760.74px;top:644px;font-size:15.4px;transform:scaleX(0.9396);transform-origin:left top">Replace</span> <span class="t" style="left:817.58px;top:644px;font-size:15.4px;transform:scaleX(1.0950);transform-origin:left top">with</span> <span class="t" style="left:851.33px;top:644px;font-size:15.4px;transform:scaleX(1.0283);transform-origin:left top">your</span> <span class="t" style="left:885.89px;top:644px;font-size:15.4px;transform:scaleX(1.0309);transform-origin:left top">data]</span> <span class="t" style="left:678.80px;top:664px;font-size:15.4px;transform:scaleX(0.9691);transform-origin:left top">Disaster</span> <span class="t" style="left:737.30px;top:664px;font-size:15.4px;transform:scaleX(0.9577);transform-origin:left top">Recovery</span> <span class="t" style="left:803.35px;top:664px;font-size:15.4px;transform:scaleX(0.9456);transform-origin:left top">Plan</span></div>
<div style="left:666px;top:697px;width:8px;height:8px;background:#db843d;"></div>
<div class="g"><span class="t" style="left:678.80px;top:694px;font-size:15.4px;transform:scaleX(0.9045);transform-origin:left top">[EXAMPLE</span> <span class="t" style="left:752.25px;top:694px;font-size:15.4px;transform:scaleX(0.9968);transform-origin:left top">-</span> <span class="t" style="left:761.14px;top:694px;font-size:15.4px;transform:scaleX(0.9441);transform-origin:left top">Replace</span> <span class="t" style="left:818.26px;top:694px;font-size:15.4px;transform:scaleX(1.1003);transform-origin:left top">with</span> <span class="t" style="left:852.16px;top:694px;font-size:15.4px;transform:scaleX(1.0333);transform-origin:left top">your</span> <span class="t" style="left:886.89px;top:694px;font-size:15.4px;transform:scaleX(1.0359);transform-origin:left top">data]</span> <span class="t" style="left:926.15px;top:694px;font-size:15.4px;transform:scaleX(0.9209);transform-origin:left top">Crisis</span> <span class="t" style="left:678.80px;top:715px;font-size:15.4px;transform:scaleX(1.0113);transform-origin:left top">Management</span></div>
<div style="left:666px;top:748px;width:8px;height:8px;background:#93a9cf;"></div>
<div class="g"><span class="t" style="left:678.80px;top:745px;font-size:15.4px;transform:scaleX(0.9001);transform-origin:left top">[EXAMPLE</span> <span class="t" style="left:751.89px;top:745px;font-size:15.4px;transform:scaleX(0.9920);transform-origin:left top">-</span> <span class="t" style="left:760.74px;top:745px;font-size:15.4px;transform:scaleX(0.9396);transform-origin:left top">Replace</span> <span class="t" style="left:817.58px;top:745px;font-size:15.4px;transform:scaleX(1.0950);transform-origin:left top">with</span> <span class="t" style="left:851.33px;top:745px;font-size:15.4px;transform:scaleX(1.0283);transform-origin:left top">your</span> <span class="t" style="left:885.89px;top:745px;font-size:15.4px;transform:scaleX(1.0309);transform-origin:left top">data]</span> <span class="t" style="left:678.80px;top:765px;font-size:15.4px;transform:scaleX(0.9955);transform-origin:left top">Training,</span> <span class="t" style="left:741.64px;top:765px;font-size:15.4px;transform:scaleX(1.0029);transform-origin:left top">Testing</span> <span class="t" style="left:794.35px;top:765px;font-size:15.4px;transform:scaleX(1.1067);transform-origin:left top">&amp;</span> <span class="t" style="left:809.48px;top:765px;font-size:15.4px;transform:scaleX(1.0151);transform-origin:left top">Maintenance</span></div>
<span class="t" style="left:25.69px;top:602.70px;font-size:15.6px;font-weight:700;transform:rotate(-90deg) scaleX(0.9459);transform-origin:center">Score (1-5)</span>
<div style="left:0px;top:907px;width:1895px;height:32px;background:#e6e6e6;"></div>
<div style="left:0px;top:906px;width:1895px;height:1px;background:#ababab;"></div>
<svg style="left:28px;top:916px" width="10" height="12"><polygon points="7,1 7,11 1.5,6" fill="#c6c6c6"/></svg>
<svg style="left:59px;top:916px" width="10" height="12"><polygon points="3,1 3,11 8.5,6" fill="#c6c6c6"/></svg>
<div style="left:112px;top:910px;width:1px;height:25px;background:#a0a0a0;"></div>
<div style="left:115px;top:909px;width:112px;height:26px;background:#1f3864;"></div>
<div style="left:335px;top:909px;width:207px;height:26px;background:#1f6b75;"></div>
<div style="left:547px;top:909px;width:199px;height:26px;background:#c00000;"></div>
<div style="left:544px;top:910px;width:1px;height:25px;background:#a0a0a0;"></div>
<div style="left:748px;top:910px;width:1px;height:25px;background:#a0a0a0;"></div>
<div style="left:229px;top:906px;width:104px;height:29px;background:linear-gradient(#fff 40%,#e3eadf 70%,#c3d1bd 100%);border-left:1px solid #ababab;border-right:1px solid #ababab;border-bottom:2px solid #217346;box-sizing:border-box"></div>
<span class="t" style="left:125.32px;top:913px;font-size:16.9px;color:#fff;transform:scaleX(1.0442);transform-origin:left top">Instructions</span>
<span class="t" style="left:241.05px;top:913px;font-size:16.9px;font-weight:700;color:#217346;transform:scaleX(0.9591);transform-origin:left top">Scorecard</span>
<span class="t" style="left:349.85px;top:913px;font-size:16.9px;color:#fff;transform:scaleX(1.0198);transform-origin:left top">Improvement_Priorities</span>
<span class="t" style="left:560.44px;top:913px;font-size:16.9px;color:#fff;transform:scaleX(0.9507);transform-origin:left top">Pro_Tips_and_Mistakes</span>
<svg style="left:786px;top:912px" width="22" height="22"><circle cx="11.2" cy="10.8" r="9.2" fill="none" stroke="#6a6a6a" stroke-width="1.2"/><path d="M6.2 10.8H16.2M11.2 5.8V15.8" stroke="#6a6a6a" stroke-width="1.5"/></svg>
<div style="left:1150px;top:916px;width:3px;height:3px;background:#b2b2b2;"></div>
<div style="left:1150px;top:921px;width:3px;height:3px;background:#b2b2b2;"></div>
<div style="left:1150px;top:926px;width:3px;height:3px;background:#b2b2b2;"></div>
<div style="left:1170px;top:913px;width:722px;height:19px;background:#f3f3f3;"></div>
<div style="left:1170px;top:913px;width:19px;height:19px;background:#fff;border:1px solid #8f8f8f;box-sizing:border-box"></div>
<svg style="left:1175px;top:917px" width="8" height="12"><polygon points="6.2,1 6.2,10 1,5.5" fill="#222"/></svg>
<div style="left:1189px;top:913px;width:598px;height:19px;background:#fff;border:1px solid #8f8f8f;box-sizing:border-box"></div>
<div style="left:1873px;top:913px;width:19px;height:19px;background:#fff;border:1px solid #8f8f8f;box-sizing:border-box"></div>
<svg style="left:1880px;top:917px" width="8" height="12"><polygon points="1,1 1,10.5 6.5,5.75" fill="#222"/></svg>
<div style="left:0px;top:938px;width:1921px;height:1px;background:#d6d6d6;"></div>
<div style="left:0px;top:939px;width:1921px;height:26px;background:#f3f3f3;"></div>
<div style="left:0px;top:965px;width:41px;height:1px;background:#b4b4b4;"></div>
<div style="left:41px;top:965px;width:1606px;height:1px;background:#808080;"></div>
<div style="left:1647px;top:965px;width:273px;height:1px;background:#a8a8a8;"></div>
<span class="t" style="left:13.51px;top:946px;font-size:13.2px;color:#444;transform:scaleX(0.9562);transform-origin:left top">Ready</span>
<span class="t" style="left:138.50px;top:946px;font-size:13.2px;font-weight:700;color:#333;transform:scaleX(0.9625);transform-origin:left top">Accessibility: Investigate</span>
<span class="t" style="left:1877.24px;top:947px;font-size:12.8px;color:#444;transform:scaleX(0.9507);transform-origin:left top">100%</span>
<svg style="left:76px;top:943px" width="18" height="18"><rect x="2.6" y="2.7" width="13" height="12.6" fill="#fff" stroke="#666" stroke-width="1.2"/><rect x="8.8" y="2.1" width="7.4" height="3.5" fill="#666"/><circle cx="4.3" cy="4.4" r="4.3" fill="#f3f3f3"/><circle cx="4.3" cy="4.4" r="3.4" fill="#666"/><path d="M8.1 7.6h1.8M11.1 7.6h1.8M5.1 10.5h1.8M8.1 10.5h1.8M11.1 10.5h1.8M5.1 13.4h1.8M8.1 13.4h1.8M11.1 13.4h1.8" stroke="#555" stroke-width="0.95"/></svg>
<svg style="left:114px;top:942px" width="24" height="22"><path d="M9.2 3.2A7.1 7.1 0 0 0 10.1 17.4" fill="none" stroke="#555" stroke-width="1.15" stroke-dasharray="3.1 1.5"/><path d="M9.4 2v7" stroke="#555" stroke-width="1"/><polygon points="7.1,8.3 11.8,8.3 9.45,10.9" fill="#555"/><path d="M12.2 8.4h4" stroke="#555" stroke-width="1"/><polygon points="15.3,6.1 15.3,10.7 18,8.4" fill="#555"/><path d="M11.3 11.9l9.4 7.6" stroke="#444" stroke-width="2"/><path d="M20.4 11.6l-9.2 7.9" stroke="#444" stroke-width="1.5"/></svg>
<div style="left:1547px;top:939px;width:50px;height:26px;background:#c6c6c6;"></div>
<svg style="left:1563px;top:943px" width="18" height="18"><rect x="1.5" y="1.5" width="15" height="15" fill="none" stroke="#666"/><path d="M1.5 6.5h15M1.5 11.5h15M6.5 1.5v15M11.5 1.5v15" stroke="#666"/></svg>
<svg style="left:1612px;top:943px" width="20" height="18"><rect x="1.5" y="1.5" width="16" height="14" fill="none" stroke="#666"/><rect x="5.5" y="3.5" width="8" height="10" fill="none" stroke="#666"/><path d="M7.3 6.4h4.6M7.3 8.5h4.6M7.3 10.6h4.6" stroke="#666" stroke-width="0.9"/></svg>
<svg style="left:1662px;top:943px" width="20" height="18"><rect x="1.5" y="1.5" width="16" height="15" fill="none" stroke="#666"/><path d="M6.5 1.5v9M11.5 1.5v9M1.5 10.5h10.5" fill="none" stroke="#666"/></svg>
<div style="left:1704px;top:952px;width:9px;height:1px;background:#444;"></div>
<div style="left:1720px;top:952px;width:125px;height:1px;background:#444;"></div>
<div style="left:1780px;top:945px;width:6px;height:14px;background:#444;"></div>
<div style="left:1851px;top:952px;width:10px;height:1px;background:#444;"></div>
<div style="left:1855px;top:947px;width:1px;height:11px;background:#444;"></div>
<div style="left:1919px;top:0px;width:1px;height:966px;background:#f0f0f0;"></div>
<div style="left:1920px;top:0px;width:1px;height:966px;background:#000;"></div>
</body></html>
